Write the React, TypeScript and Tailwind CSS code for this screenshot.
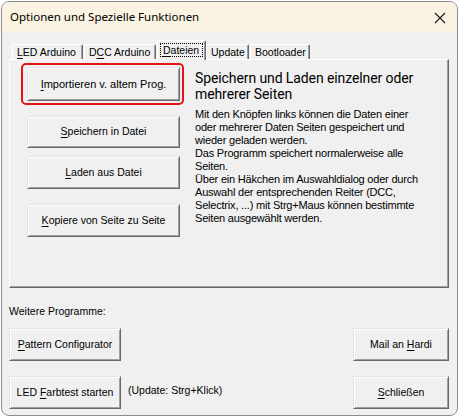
import React from 'react'

const ui = { fontFamily: '"Liberation Sans", Arial, sans-serif' }

function Key({ children }: { children: React.ReactNode }) {
  return <span className="underline underline-offset-[2px] decoration-[1px]">{children}</span>
}

function Btn({ className = '', children }: { className?: string; children: React.ReactNode }) {
  return (
    <div
      className={`flex items-center justify-center bg-[#f0f0f0] border border-t-[#e3e3e3] border-l-[#e3e3e3] border-r-[#696969] border-b-[#696969] shadow-[inset_1px_1px_#ffffff,inset_-1px_-1px_#a0a0a0] text-black ${className}`}
    >
      {children}
    </div>
  )
}

function Tab({ active = false, children, className = '' }: { active?: boolean; children: React.ReactNode; className?: string }) {
  if (active) {
    return (
      <div className={`relative z-10 -mb-[1px] h-[20px] bg-[#f0f0f0] border-t border-l border-white border-r border-r-[#696969] rounded-t-[2px] shadow-[inset_-1px_0_#a0a0a0] pt-[2px] px-[2px] ${className}`}>
        <div className="border border-dotted border-black px-[2px] h-[14px] leading-[12px]">{children}</div>
      </div>
    )
  }
  return (
    <div className={`h-[15px] border-t border-l border-white border-r border-r-[#696969] rounded-t-[2px] shadow-[inset_-1px_0_#a0a0a0] px-[4px] leading-[14px] ${className}`}>
      {children}
    </div>
  )
}

export default function App() {
  return (
    <div className="w-[461px] h-[418px] bg-white overflow-hidden" style={ui}>
      <div className="ml-[1px] mt-[1px] w-[457px] h-[415px] rounded-[8px] border border-[#8c8c8c] bg-[#f0f0f0] overflow-hidden flex flex-col">
        <div className="h-[30px] bg-[#faf3e1] flex items-center justify-between pl-[8px] pr-[5px]">
          <span className="text-black" style={{ fontFamily: '"Noto Sans", "Liberation Sans", sans-serif', fontSize: '11.5px' }}>
            Optionen und Spezielle Funktionen
          </span>
          <svg width="12" height="12" viewBox="0 0 12 12" className="mr-[6px] mt-[1px]">
            <path d="M1 1 L11 11 M11 1 L1 11" stroke="#1a1a1a" strokeWidth="1.1" />
          </svg>
        </div>

        <div className="flex flex-col pl-[7px]">
          <div className="flex items-end h-[20px] mt-[7px] pl-[3px] text-[10.5px] text-black">
            <Tab className="w-[71px]"><Key>L</Key>ED Arduino</Tab>
            <Tab className="w-[72px] ml-[1px]">D<Key>C</Key>C Arduino</Tab>
            <Tab active className="w-[49px] ml-[1px]"><Key>D</Key>ateien</Tab>
            <Tab className="w-[43px]">Update</Tab>
            <Tab className="w-[60px] ml-[1px]">Bootloader</Tab>
          </div>

          <div className="w-[440px] h-[229px] border-t border-l border-white border-r border-r-[#696969] border-b border-b-[#696969] shadow-[inset_-1px_-1px_#a0a0a0] flex">
            <div className="w-[176px] pl-[11px] pt-[3px] flex flex-col">
              <div className="w-[163px] h-[42px] border-2 border-[#e8121b] rounded-[5px] pl-[4px] pt-[2px]">
                <Btn className="w-[153px] h-[34px] text-[11px]"><span><Key>I</Key>mportieren v. altem Prog.</span></Btn>
              </div>
              <Btn className="w-[153px] h-[32px] ml-[6px] mt-[11px] text-[10.5px]"><span><Key>S</Key>peichern in Datei</span></Btn>
              <Btn className="w-[153px] h-[33px] ml-[6px] mt-[8px] text-[10.5px]"><span><Key>L</Key>aden aus Datei</span></Btn>
              <Btn className="w-[153px] h-[33px] ml-[6px] mt-[15px] text-[10.5px]"><span><Key>K</Key>opiere von Seite zu Seite</span></Btn>
            </div>
            <div className="pl-[9px] pt-[10px] text-black">
              <div className="text-[14px] leading-[16px] tracking-[-0.1px]" style={{ fontFamily: 'Roboto, "Liberation Sans", sans-serif' }}>
                Speichern und Laden einzelner oder<br />mehrerer Seiten
              </div>
              <div className="mt-[6px] text-[11px] leading-[13px] tracking-[-0.2px]">
                Mit den Knöpfen links können die Daten einer<br />
                oder mehrerer Daten Seiten gespeichert und<br />
                wieder geladen werden.<br />
                Das Programm speichert normalerweise alle<br />
                Seiten.<br />
                Über ein Häkchen im Auswahldialog oder durch<br />
                Auswahl der entsprechenden Reiter (DCC,<br />
                Selectrix, ...) mit Strg+Maus können bestimmte<br />
                Seiten ausgewählt werden.
              </div>
            </div>
          </div>

          <div className="mt-[17px] text-[10.5px] leading-[13px] text-black">Weitere Programme:</div>

          <div className="flex justify-between w-[440px] mt-[10px]">
            <Btn className="w-[112px] h-[33px] text-[10.5px]"><span><Key>P</Key>attern Configurator</span></Btn>
            <Btn className="w-[96px] h-[33px] text-[10.5px]"><span>Mail an <Key>H</Key>ardi</span></Btn>
          </div>

          <div className="flex items-center w-[440px] mt-[15px]">
            <Btn className="w-[112px] h-[33px] text-[10.5px]"><span>LED <Key>F</Key>arbtest starten</span></Btn>
            <span className="ml-[7px] text-[10.5px] text-black -mt-[3px]">(Update: Strg+Klick)</span>
            <Btn className="w-[96px] h-[33px] ml-auto text-[10.5px]"><span><Key>S</Key>chließen</span></Btn>
          </div>
        </div>
      </div>
    </div>
  )
}
